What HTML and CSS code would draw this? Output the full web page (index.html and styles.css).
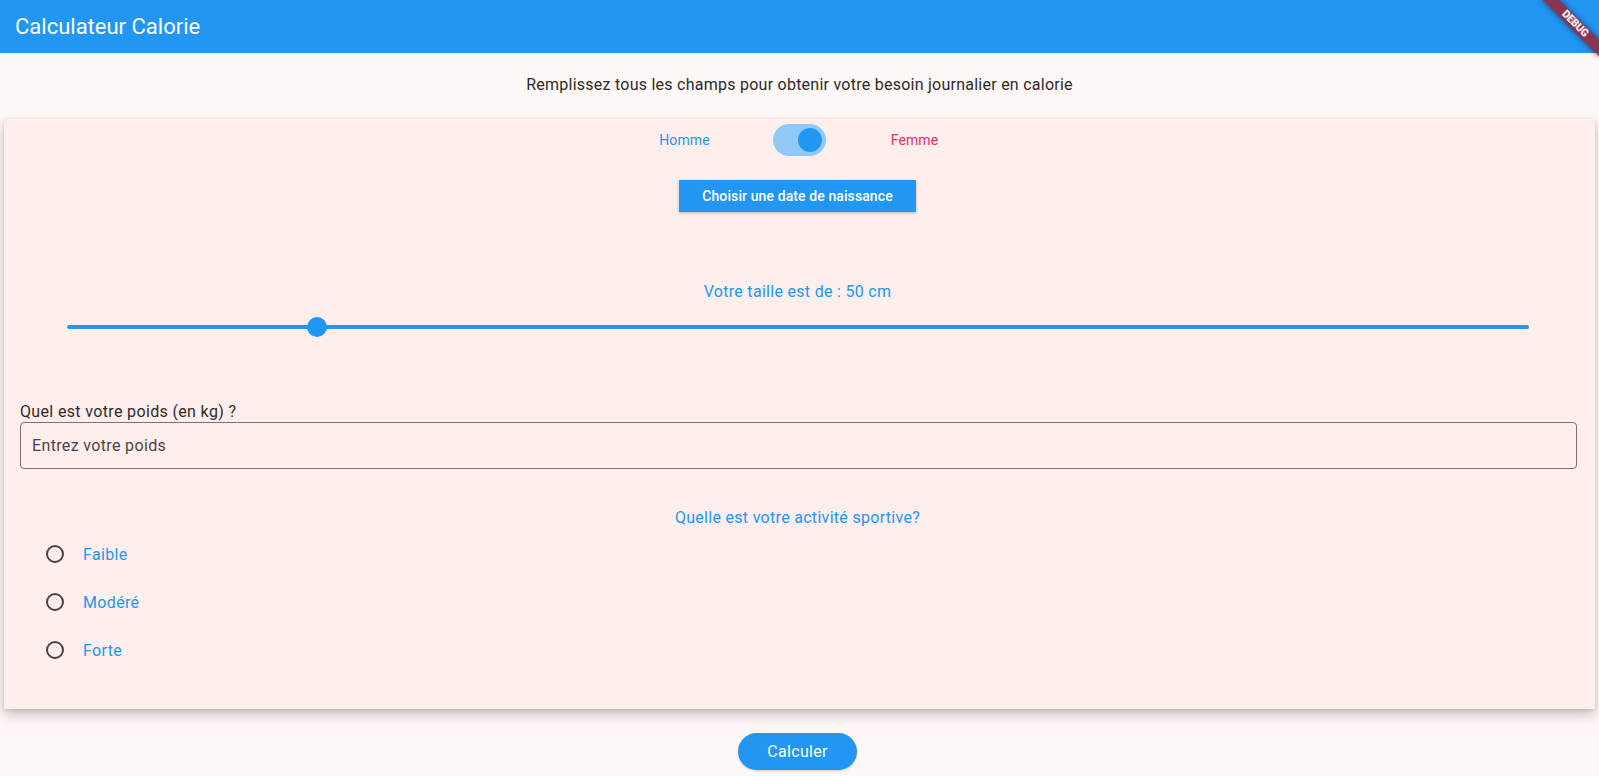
FILE: index.html
```html
<!DOCTYPE html>
<html lang="fr">
<head>
<meta charset="utf-8">
<title>Calculateur Calorie</title>
<link rel="stylesheet" href="styles.css">
</head>
<body>
<header class="appbar"><h1 class="appbar-title">Calculateur Calorie</h1></header>
<div class="debug-banner">DEBUG</div>
<p class="intro">Remplissez tous les champs pour obtenir votre besoin journalier en calorie</p>
<section class="card">
  <div class="gender-row">
    <span class="gender homme">Homme</span>
    <span class="switch"><span class="switch-thumb"></span></span>
    <span class="gender femme">Femme</span>
  </div>
  <div class="date-wrap"><button class="date-btn">Choisir une date de naissance</button></div>
  <p class="blue-label size-label">Votre taille est de : 50 cm</p>
  <div class="slider">
    <div class="slider-track"></div>
    <div class="slider-thumb" style="left: 17.08%"></div>
  </div>
  <div class="weight">
    <label class="weight-label">Quel est votre poids (en kg) ?</label>
    <div class="field">Entrez votre poids</div>
  </div>
  <p class="blue-label activity-label">Quelle est votre activité sportive?</p>
  <ul class="radios">
    <li class="radio-row"><span class="radio"></span><span class="radio-text">Faible</span></li>
    <li class="radio-row"><span class="radio"></span><span class="radio-text">Modéré</span></li>
    <li class="radio-row"><span class="radio"></span><span class="radio-text">Forte</span></li>
  </ul>
</section>
<div class="actions"><button class="calc-btn">Calculer</button></div>
</body>
</html>
```
FILE: styles.css
```css
html, body {
  margin: 0;
  padding: 0;
  overflow: hidden;
  height: 776px;
}
body {
  background: #fff8f6;
  font-family: Roboto, "Liberation Sans", sans-serif;
  color: #2a2627;
}
.appbar {
  height: 53px;
  background: #2196f3;
  display: flex;
  align-items: center;
  padding-left: 15px;
}
.appbar-title {
  margin: 0;
  font-size: 22px;
  font-weight: 400;
  color: #fff;
}
.debug-banner {
  position: fixed;
  top: 18px;
  right: -16px;
  width: 80px;
  height: 12px;
  line-height: 12px;
  transform: rotate(45deg);
  background: rgba(160, 28, 45, 0.8);
  color: #fff;
  font-size: 10.2px;
  font-weight: 900;
  text-align: center;
  box-shadow: 0 0 6px rgba(0, 0, 0, 0.5);
}
.intro {
  margin: 0;
  height: 62px;
  display: flex;
  align-items: center;
  justify-content: center;
  font-size: 16px;
  letter-spacing: 0.25px;
  color: #2d2a2b;
}
.card {
  margin: 4px 4px 0;
  height: 590px;
  box-sizing: border-box;
  background: #ffefec;
  box-shadow: 0 6px 12px rgba(0, 0, 0, 0.22), 0 1px 4px rgba(0, 0, 0, 0.12);
  padding-bottom: 34px;
}
.gender-row {
  height: 42px;
  display: grid;
  grid-template-columns: 177px 53px 177px;
  justify-content: center;
  align-items: center;
}
.gender {
  text-align: center;
  font-size: 14px;
  letter-spacing: 0.1px;
}
.homme { color: #2196f3; }
.femme { color: #e0306b; }
.switch {
  width: 53px;
  height: 32px;
  border-radius: 16px;
  background: #90c8f6;
  display: flex;
  align-items: center;
  justify-content: flex-end;
  padding-right: 4px;
  box-sizing: border-box;
}
.switch-thumb {
  width: 24px;
  height: 24px;
  border-radius: 50%;
  background: #2196f3;
}
.date-wrap {
  margin-top: 19px;
  display: flex;
  justify-content: center;
}
.date-btn {
  height: 32px;
  width: 237px;
  border: 0;
  border-radius: 0;
  background: #2196f3;
  color: #fff;
  font-family: Roboto, "Liberation Sans", sans-serif;
  font-size: 14px;
  font-weight: 500;
  letter-spacing: 0.1px;
  box-shadow: 0 1px 3px rgba(0, 0, 0, 0.25);
  padding: 0;
  margin-left: -4px;
}
.blue-label {
  margin: 0;
  height: 20px;
  line-height: 20px;
  text-align: center;
  font-size: 16px;
  letter-spacing: 0.3px;
  color: #2196f3;
}
.size-label { margin-top: 70px; margin-left: -4px; }
.slider {
  position: relative;
  height: 48px;
  margin: 1px 66px 0 63px;
  display: flex;
  align-items: center;
}
.slider-track {
  width: 100%;
  height: 4px;
  border-radius: 2px;
  background: #2196f3;
}
.slider-thumb {
  position: absolute;
  top: 14px;
  width: 20px;
  height: 20px;
  margin-left: -10px;
  border-radius: 50%;
  background: #2196f3;
}
.weight {
  margin: 51px 18px 0 16px;
}
.weight-label {
  display: block;
  height: 20px;
  line-height: 20px;
  font-size: 16px;
  letter-spacing: 0.35px;
  color: #2d2a2b;
}
.field {
  height: 47px;
  box-sizing: border-box;
  border: 1px solid #7b7073;
  border-radius: 4px;
  padding-left: 11px;
  display: flex;
  align-items: center;
  font-size: 16px;
  letter-spacing: 0.35px;
  color: #4a4446;
}
.activity-label { margin-top: 39px; margin-left: -4px; }
.radios {
  list-style: none;
  margin: 2px 0 0;
  padding: 0;
}
.radio-row {
  height: 48px;
  display: flex;
  align-items: center;
  padding-left: 42px;
}
.radio {
  width: 18px;
  height: 18px;
  box-sizing: border-box;
  border: 2px solid #4a4244;
  border-radius: 50%;
}
.radio-text {
  margin-left: 19px;
  font-size: 16px;
  letter-spacing: 0.35px;
  color: #2196f3;
}
.actions {
  display: flex;
  justify-content: center;
  margin-top: 24px;
}
.calc-btn {
  height: 37px;
  width: 119px;
  border: 0;
  border-radius: 19px;
  background: #2196f3;
  color: #fff;
  font-family: Roboto, "Liberation Sans", sans-serif;
  font-size: 16px;
  letter-spacing: 0.3px;
  padding: 0;
  margin-left: -4px;
  box-shadow: 0 1px 2px rgba(0, 0, 0, 0.2);
}
```
